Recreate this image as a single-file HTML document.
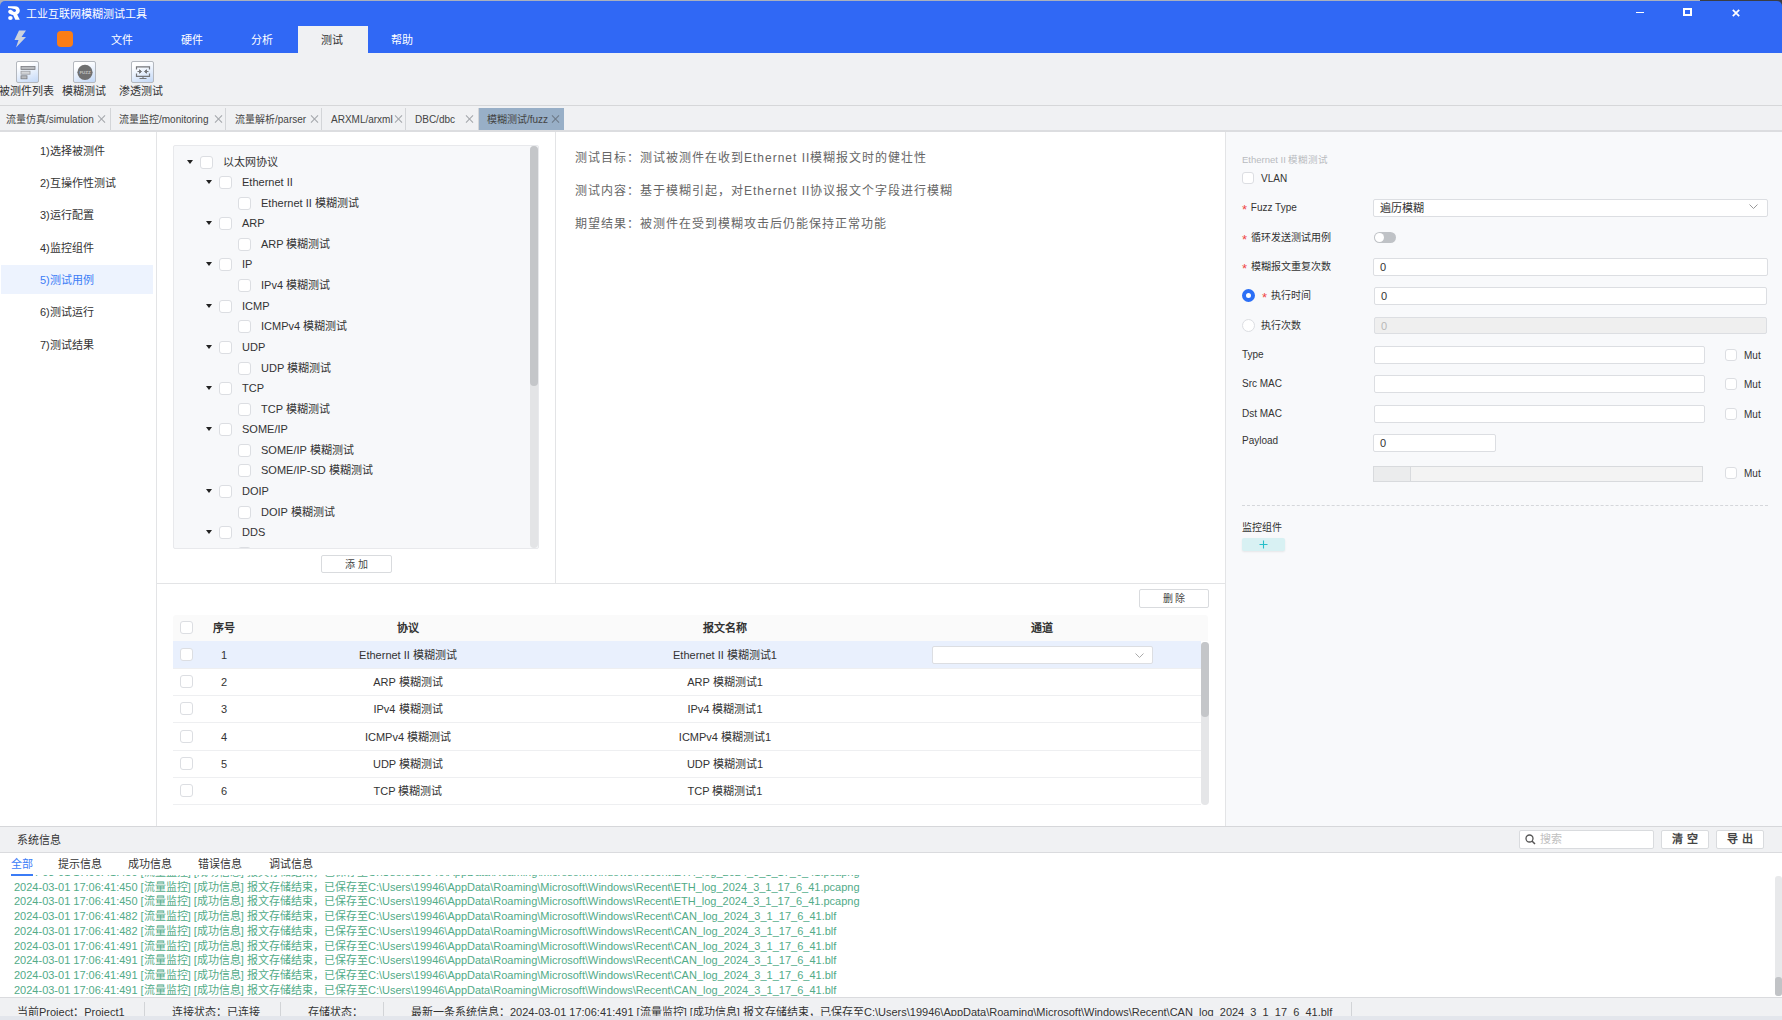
<!DOCTYPE html>
<html lang="zh-CN"><head><meta charset="utf-8">
<style>
*{box-sizing:border-box;margin:0;padding:0}
html,body{width:1782px;height:1020px;overflow:hidden;background:#fff;font-family:"Liberation Sans",sans-serif;color:#333}
.a{position:absolute}
.t{position:absolute;white-space:nowrap;line-height:1}
#title{left:0;top:1px;width:1782px;height:52px;background:#3068f5;border-radius:5px 5px 0 0}
#toolbar{left:0;top:53px;width:1782px;height:53px;background:#f0f1f3;border-bottom:1px solid #d6d7d9}
#tabs{left:0;top:106px;width:1782px;height:26px;background:#f0f1f3;border-bottom:2px solid #dcdde0}
#nav{left:0;top:132px;width:157px;height:694px;background:#fff;border-right:1px solid #e3e4e6}
.cb{position:absolute;width:13px;height:13px;border:1px solid #dcdee2;border-radius:3px;background:#fff}
.car{position:absolute;width:0;height:0;border-left:3.5px solid transparent;border-right:3.5px solid transparent;border-top:4px solid #222}

.tbi{top:61px;width:23px;height:22px;border:1px solid #b4b8be;border-radius:2px;background:linear-gradient(160deg,#ffffff 20%,#e6effc 55%,#c3d8f7)}
.tab{top:108px;height:22px;border-right:1px solid #d3d5d8;font-size:10px;color:#444}
.x{position:absolute;top:7px;width:8px;height:8px}
.x:before,.x:after{content:"";position:absolute;left:3.5px;top:-1px;width:1px;height:10px;background:#a3a6ab;transform:rotate(45deg)}
.x:after{transform:rotate(-45deg)}
.xa:before,.xa:after{background:#6d7a88}

.nv{left:40px;font-size:11px;color:#333;margin-top:1px}
.tr{font-size:11px;color:#333}
.btn{border:1px solid #d9dbde;border-radius:2px;background:#fff;font-size:10px;color:#444;text-align:center;line-height:18px}
.ds{left:575px;margin-top:1px;font-size:12px;color:#666;letter-spacing:1px}

.lb{font-size:10px;color:#333}
.req{color:#f04545;margin-right:1px;position:relative;top:2.5px;font-size:13px;line-height:0}
.inp{border:1px solid #dcdee2;border-radius:2px;background:#fff;font-size:11px;color:#333;line-height:16px}
.th{font-size:11px;font-weight:bold;color:#333;margin-top:1px}
.td{font-size:11px;color:#333}

.lt{top:859px;font-size:11px;color:#333}
.lg{left:14px;font-size:11px;color:#52ab88}
.st{top:1007px;font-size:11px;color:#333}
.sp{top:1002px;width:1px;height:14px;background:#d2d4d7}
</style></head><body>
<div class="a" style="left:0;top:0;width:1782px;height:2px;background:#aab0bd"></div><div class="a" style="left:1700px;top:0;width:82px;height:2px;background:#3a3d44"></div>
<div class="a" style="left:0;top:0;width:10px;height:10px;background:#aab0bd"></div><div class="a" style="left:1772px;top:0;width:10px;height:10px;background:#3a3d44"></div>
<div id="title" class="a"></div>
<div id="toolbar" class="a"></div>
<div id="tabs" class="a"></div>
<div id="nav" class="a"></div>

<!-- title -->
<svg class="a" style="left:0;top:0" width="26" height="25" viewBox="0 0 26 25"><path d="M8 6.2 H14.8 C18.2 6.2 19.8 8.2 19.8 10.6 C19.8 12.6 18.7 13.9 17.2 14.5 L19.8 19.8 H15.3 L13.1 15 C11.3 14.8 9.6 14.1 8.7 13.1 C7.9 12.1 8.1 10.3 9.4 9.9 C10.7 9.5 11.9 10.1 12.9 11.2 L14.2 11.9 C15.4 11.9 16 11.3 16 10.5 C16 9.6 15.3 9 14.2 9 C12 8.4 9.8 8 8 7.9 Z" fill="#fff"/><ellipse cx="10.4" cy="17.9" rx="2.3" ry="2" fill="#fff"/></svg>
<div class="t" style="left:26px;top:9px;font-size:11px;color:#fff">工业互联网模糊测试工具</div>
<div class="a" style="left:1636px;top:11.5px;width:8px;height:1.5px;background:#fff"></div>
<div class="a" style="left:1684px;top:8px;width:8px;height:7px;border-top:1px solid #dfe8fd;border-right:1px solid #dfe8fd"></div>
<div class="a" style="left:1683px;top:8px;width:9px;height:8px;border:2px solid #fff"></div>
<svg class="a" style="left:1732px;top:8.5px" width="8" height="8" viewBox="0 0 8 8"><path d="M0.8 0.8 L7.2 7.2 M7.2 0.8 L0.8 7.2" stroke="#fff" stroke-width="1.7"/></svg>
<!-- menu -->
<svg class="a" style="left:13px;top:30px" width="14" height="18" viewBox="0 0 14 18"><path d="M6 0.5 L13 0.5 L8.5 7 L13 7 L3 17.5 L5.5 10 L1.5 10 Z" fill="#cdd3dd"/></svg>
<div class="a" style="left:57px;top:31px;width:16px;height:16px;border-radius:4px;background:#fb7d17"></div>
<div class="a" style="left:298px;top:26px;width:70px;height:27px;background:#f0f1f3"></div>
<div class="t" style="left:111px;top:35px;font-size:11px;color:#fff">文件</div>
<div class="t" style="left:181px;top:35px;font-size:11px;color:#fff">硬件</div>
<div class="t" style="left:251px;top:35px;font-size:11px;color:#fff">分析</div>
<div class="t" style="left:321px;top:35px;font-size:11px;color:#333">测试</div>
<div class="t" style="left:391px;top:35px;font-size:11px;color:#fff">帮助</div>
<!-- toolbar icons -->
<div class="a tbi" style="left:16px"><svg class="a" style="left:0;top:0" width="22" height="21" viewBox="0 0 22 21"><rect x="4" y="4.5" width="14" height="3" fill="#b9bbbe" stroke="#7a7c80" stroke-width="0.8"/><rect x="4" y="9.2" width="9" height="3" fill="#d4d6d9" stroke="#9a9ca0" stroke-width="0.8"/><rect x="4" y="13.8" width="6" height="3" fill="#b9bbbe" stroke="#7a7c80" stroke-width="0.8"/></svg></div>
<div class="a tbi" style="left:73px"><svg class="a" style="left:0;top:0" width="22" height="21" viewBox="0 0 22 21"><circle cx="11" cy="10.3" r="7.6" fill="#707070"/><text x="11" y="12" font-size="4.4" font-family="Liberation Sans" font-weight="bold" fill="#c4c4c4" text-anchor="middle">FUZZ</text></svg></div>
<div class="a tbi" style="left:131px"><svg class="a" style="left:0;top:0" width="22" height="21" viewBox="0 0 22 21"><path d="M4.5 7.5 V4.8 H17.5 V7.5 M4.5 11.5 V14.3 H17.5 V11.5" fill="none" stroke="#747679" stroke-width="1.2"/><path d="M5.5 9.5 H9 M7.5 7.8 L9.5 9.5 L7.5 11.2 Z M16.5 9.5 H13 M14.5 7.8 L12.5 9.5 L14.5 11.2 Z" stroke="#747679" stroke-width="1" fill="#747679"/><path d="M11 14.3 V16.3 M7.5 16.5 H14.5" stroke="#747679" stroke-width="1.1"/></svg></div>
<div class="t" style="left:-1px;top:86px;font-size:11px;color:#333">被测件列表</div>
<div class="t" style="left:62px;top:86px;font-size:11px;color:#333">模糊测试</div>
<div class="t" style="left:119px;top:86px;font-size:11px;color:#333">渗透测试</div>
<!-- tabs -->
<div class="a" style="left:0;top:108px;width:1782px;height:22px;background:#f0f1f3"></div>
<div class="a tab" style="left:0;width:111px"><span class="t" style="left:6px;top:7px">流量仿真/simulation</span><span class="x" style="left:97px"></span></div>
<div class="a tab" style="left:111px;width:115px"><span class="t" style="left:8px;top:7px">流量监控/monitoring</span><span class="x" style="left:103px"></span></div>
<div class="a tab" style="left:226px;width:96px"><span class="t" style="left:9px;top:7px">流量解析/parser</span><span class="x" style="left:84px"></span></div>
<div class="a tab" style="left:322px;width:84px"><span class="t" style="left:9px;top:7px">ARXML/arxml</span><span class="x" style="left:72px"></span></div>
<div class="a tab" style="left:406px;width:73px"><span class="t" style="left:9px;top:7px">DBC/dbc</span><span class="x" style="left:59px"></span></div>
<div class="a tab" style="left:479px;width:85px;background:#98afc7;border-right:none"><span class="t" style="left:8px;top:7px">模糊测试/fuzz</span><span class="x xa" style="left:72px"></span></div>

<!-- nav -->
<div class="a" style="left:1px;top:265px;width:152px;height:29px;background:#edf3fe"></div>
<div class="t nv" style="top:145px">1)选择被测件</div>
<div class="t nv" style="top:177px">2)互操作性测试</div>
<div class="t nv" style="top:209px">3)运行配置</div>
<div class="t nv" style="top:242px">4)监控组件</div>
<div class="t nv" style="top:274px;color:#3b7cf6">5)测试用例</div>
<div class="t nv" style="top:306px">6)测试运行</div>
<div class="t nv" style="top:339px">7)测试结果</div>
<!-- tree panel -->
<div class="a" style="left:157px;top:132px;width:399px;height:452px;border-right:1px solid #e3e4e6"></div>
<div class="a" style="left:157px;top:583px;width:1068px;height:1px;background:#e3e4e6"></div>
<div class="a" style="left:173px;top:145px;width:366px;height:404px;background:#f7f8fa;border:1px solid #e8e9ec;border-radius:2px"></div>
<div class="a" style="left:530px;top:146px;width:8px;height:402px;background:#e3e4e6;border-radius:4px"></div>
<div class="a" style="left:530px;top:146px;width:8px;height:240px;background:#c4c6c9;border-radius:4px"></div>
<div class="a" style="left:0;top:0;width:1782px;height:548px;overflow:hidden">
<div class="car" style="left:187px;top:160px"></div><div class="cb" style="left:200px;top:156px"></div><div class="t tr" style="left:223px;top:157px">以太网协议</div>
<div class="car" style="left:206px;top:180px"></div><div class="cb" style="left:219px;top:176px"></div><div class="t tr" style="left:242px;top:177px">Ethernet II</div>
<div class="cb" style="left:238px;top:197px"></div><div class="t tr" style="left:261px;top:198px">Ethernet II 模糊测试</div>
<div class="car" style="left:206px;top:221px"></div><div class="cb" style="left:219px;top:217px"></div><div class="t tr" style="left:242px;top:218px">ARP</div>
<div class="cb" style="left:238px;top:238px"></div><div class="t tr" style="left:261px;top:239px">ARP 模糊测试</div>
<div class="car" style="left:206px;top:262px"></div><div class="cb" style="left:219px;top:258px"></div><div class="t tr" style="left:242px;top:259px">IP</div>
<div class="cb" style="left:238px;top:279px"></div><div class="t tr" style="left:261px;top:280px">IPv4 模糊测试</div>
<div class="car" style="left:206px;top:304px"></div><div class="cb" style="left:219px;top:300px"></div><div class="t tr" style="left:242px;top:301px">ICMP</div>
<div class="cb" style="left:238px;top:320px"></div><div class="t tr" style="left:261px;top:321px">ICMPv4 模糊测试</div>
<div class="car" style="left:206px;top:345px"></div><div class="cb" style="left:219px;top:341px"></div><div class="t tr" style="left:242px;top:342px">UDP</div>
<div class="cb" style="left:238px;top:362px"></div><div class="t tr" style="left:261px;top:363px">UDP 模糊测试</div>
<div class="car" style="left:206px;top:386px"></div><div class="cb" style="left:219px;top:382px"></div><div class="t tr" style="left:242px;top:383px">TCP</div>
<div class="cb" style="left:238px;top:403px"></div><div class="t tr" style="left:261px;top:404px">TCP 模糊测试</div>
<div class="car" style="left:206px;top:427px"></div><div class="cb" style="left:219px;top:423px"></div><div class="t tr" style="left:242px;top:424px">SOME/IP</div>
<div class="cb" style="left:238px;top:444px"></div><div class="t tr" style="left:261px;top:445px">SOME/IP 模糊测试</div>
<div class="cb" style="left:238px;top:464px"></div><div class="t tr" style="left:261px;top:465px">SOME/IP-SD 模糊测试</div>
<div class="car" style="left:206px;top:489px"></div><div class="cb" style="left:219px;top:485px"></div><div class="t tr" style="left:242px;top:486px">DOIP</div>
<div class="cb" style="left:238px;top:506px"></div><div class="t tr" style="left:261px;top:507px">DOIP 模糊测试</div>
<div class="car" style="left:206px;top:530px"></div><div class="cb" style="left:219px;top:526px"></div><div class="t tr" style="left:242px;top:527px">DDS</div>
<div class="cb" style="left:238px;top:547px"></div>

</div>

<div class="a btn" style="left:321px;top:555px;width:71px;height:18px">添 加</div>
<!-- description -->
<div class="t ds" style="top:151px">测试目标：测试被测件在收到Ethernet II模糊报文时的健壮性</div>
<div class="t ds" style="top:184px">测试内容：基于模糊引起，对Ethernet II协议报文个字段进行模糊</div>
<div class="t ds" style="top:217px">期望结果：被测件在受到模糊攻击后仍能保持正常功能</div>

<!-- right panel -->
<div class="a" style="left:1225px;top:132px;width:557px;height:694px;background:#f8f9fb;border-left:1px solid #e3e4e6"></div>
<div class="t" style="left:1242px;top:155px;font-size:9.5px;color:#b9bbbf">Ethernet II 模糊测试</div>
<div class="cb" style="left:1242px;top:172px;width:12px;height:12px"></div>
<div class="t lb" style="left:1261px;top:174px">VLAN</div>
<div class="t lb" style="left:1242px;top:203px"><span class="req">*</span> Fuzz Type</div>
<div class="a inp" style="left:1373px;top:199px;width:395px;height:18px;padding-left:6px">遍历模糊</div>
<svg class="a" style="left:1749px;top:204px" width="9" height="6" viewBox="0 0 9 6"><path d="M0.5 0.5 L4.5 4.5 L8.5 0.5" stroke="#999" fill="none" stroke-width="1"/></svg>
<div class="t lb" style="left:1242px;top:233px"><span class="req">*</span> 循环发送测试用例</div>
<div class="a" style="left:1374px;top:232px;width:22px;height:11px;border-radius:6px;background:#bfc2c6"></div>
<div class="a" style="left:1375px;top:233px;width:9px;height:9px;border-radius:50%;background:#fff"></div>
<div class="t lb" style="left:1242px;top:262px"><span class="req">*</span> 模糊报文重复次数</div>
<div class="a inp" style="left:1373px;top:258px;width:395px;height:18px;padding-left:6px">0</div>
<div class="a" style="left:1242px;top:289px;width:13px;height:13px;border-radius:50%;border:4px solid #2b6ff6;background:#fff"></div>
<div class="t lb" style="left:1262px;top:291px"><span class="req">*</span> 执行时间</div>
<div class="a inp" style="left:1374px;top:287px;width:393px;height:18px;padding-left:6px">0</div>
<div class="a" style="left:1242px;top:319px;width:13px;height:13px;border-radius:50%;border:1px solid #dcdee2;background:#fff"></div>
<div class="t lb" style="left:1261px;top:321px">执行次数</div>
<div class="a inp" style="left:1374px;top:317px;width:393px;height:17px;padding-left:6px;background:#efefef;color:#b8b8b8">0</div>
<div class="t lb" style="left:1242px;top:350px">Type</div>
<div class="a inp" style="left:1374px;top:346px;width:331px;height:18px"></div>
<div class="cb" style="left:1725px;top:349px;width:12px;height:12px"></div>
<div class="t lb" style="left:1744px;top:351px">Mut</div>
<div class="t lb" style="left:1242px;top:379px">Src MAC</div>
<div class="a inp" style="left:1374px;top:375px;width:331px;height:18px"></div>
<div class="cb" style="left:1725px;top:378px;width:12px;height:12px"></div>
<div class="t lb" style="left:1744px;top:380px">Mut</div>
<div class="t lb" style="left:1242px;top:409px">Dst MAC</div>
<div class="a inp" style="left:1374px;top:405px;width:331px;height:18px"></div>
<div class="cb" style="left:1725px;top:408px;width:12px;height:12px"></div>
<div class="t lb" style="left:1744px;top:410px">Mut</div>
<div class="t lb" style="left:1242px;top:436px">Payload</div>
<div class="a inp" style="left:1373px;top:434px;width:123px;height:18px;padding-left:6px">0</div>
<div class="a" style="left:1373px;top:466px;width:330px;height:16px;border:1px solid #d8dadd;background:#f3f3f3"></div><div class="a" style="left:1374px;top:467px;width:36px;height:14px;background:#ebeced"></div>
<div class="a" style="left:1410px;top:467px;width:1px;height:14px;background:#d8dadd"></div>
<div class="cb" style="left:1725px;top:467px;width:12px;height:12px"></div>
<div class="t lb" style="left:1744px;top:469px">Mut</div>
<div class="a" style="left:1242px;top:505px;width:526px;height:0;border-top:1px dashed #d5d7db"></div>
<div class="t lb" style="left:1242px;top:523px">监控组件</div>
<div class="a" style="left:1242px;top:538px;width:43px;height:13px;border-radius:2px;background:#d8f1f3;box-shadow:0 1px 2px rgba(0,0,0,0.08)"></div>
<svg class="a" style="left:1259px;top:540px" width="9" height="9" viewBox="0 0 9 9"><path d="M4.5 0.5 V8.5 M0.5 4.5 H8.5" stroke="#26bfc9" stroke-width="1.1"/></svg>
<!-- table -->
<div class="a btn" style="left:1139px;top:589px;width:70px;height:19px">删 除</div>
<div class="a" style="left:173px;top:615px;width:1035px;height:26px;background:#fafafa;border-radius:3px 3px 0 0"></div>
<div class="cb" style="left:180px;top:621px"></div>
<div class="t th" style="left:213px;top:622px">序号</div>
<div class="t th" style="left:397px;top:622px">协议</div>
<div class="t th" style="left:703px;top:622px">报文名称</div>
<div class="t th" style="left:1031px;top:622px">通道</div>
<div class="a" style="left:173px;top:641px;width:1028px;height:27px;background:#e9f0fd;"></div><div class="cb" style="left:180px;top:648px"></div><div class="t td" style="left:174px;width:100px;text-align:center;top:650px">1</div><div class="t td" style="left:258px;width:300px;text-align:center;top:650px">Ethernet II 模糊测试</div><div class="t td" style="left:575px;width:300px;text-align:center;top:650px">Ethernet II 模糊测试1</div>
<div class="a" style="left:173px;top:668px;width:1028px;height:27px;background:#fff;"></div><div class="cb" style="left:180px;top:675px"></div><div class="t td" style="left:174px;width:100px;text-align:center;top:677px">2</div><div class="t td" style="left:258px;width:300px;text-align:center;top:677px">ARP 模糊测试</div><div class="t td" style="left:575px;width:300px;text-align:center;top:677px">ARP 模糊测试1</div>
<div class="a" style="left:173px;top:695px;width:1028px;height:27px;background:#fff;"></div><div class="cb" style="left:180px;top:702px"></div><div class="t td" style="left:174px;width:100px;text-align:center;top:704px">3</div><div class="t td" style="left:258px;width:300px;text-align:center;top:704px">IPv4 模糊测试</div><div class="t td" style="left:575px;width:300px;text-align:center;top:704px">IPv4 模糊测试1</div>
<div class="a" style="left:173px;top:723px;width:1028px;height:27px;background:#fff;"></div><div class="cb" style="left:180px;top:730px"></div><div class="t td" style="left:174px;width:100px;text-align:center;top:732px">4</div><div class="t td" style="left:258px;width:300px;text-align:center;top:732px">ICMPv4 模糊测试</div><div class="t td" style="left:575px;width:300px;text-align:center;top:732px">ICMPv4 模糊测试1</div>
<div class="a" style="left:173px;top:750px;width:1028px;height:27px;background:#fff;"></div><div class="cb" style="left:180px;top:757px"></div><div class="t td" style="left:174px;width:100px;text-align:center;top:759px">5</div><div class="t td" style="left:258px;width:300px;text-align:center;top:759px">UDP 模糊测试</div><div class="t td" style="left:575px;width:300px;text-align:center;top:759px">UDP 模糊测试1</div>
<div class="a" style="left:173px;top:777px;width:1028px;height:27px;background:#fff;"></div><div class="cb" style="left:180px;top:784px"></div><div class="t td" style="left:174px;width:100px;text-align:center;top:786px">6</div><div class="t td" style="left:258px;width:300px;text-align:center;top:786px">TCP 模糊测试</div><div class="t td" style="left:575px;width:300px;text-align:center;top:786px">TCP 模糊测试1</div>

<div class="a" style="left:173px;top:668px;width:1028px;height:1px;background:#eeeff1"></div><div class="a" style="left:173px;top:695px;width:1028px;height:1px;background:#eeeff1"></div><div class="a" style="left:173px;top:722px;width:1028px;height:1px;background:#eeeff1"></div><div class="a" style="left:173px;top:750px;width:1028px;height:1px;background:#eeeff1"></div><div class="a" style="left:173px;top:777px;width:1028px;height:1px;background:#eeeff1"></div><div class="a" style="left:173px;top:804px;width:1028px;height:1px;background:#eeeff1"></div>
<div class="a inp" style="left:932px;top:646px;width:221px;height:18px"></div>
<svg class="a" style="left:1135px;top:653px" width="9" height="6" viewBox="0 0 9 6"><path d="M0.5 0.5 L4.5 4.5 L8.5 0.5" stroke="#aaa" fill="none" stroke-width="1"/></svg>
<div class="a" style="left:1201px;top:642px;width:8px;height:163px;background:#e5e6e8;border-radius:4px"></div>
<div class="a" style="left:1201px;top:642px;width:8px;height:75px;background:#c4c6c9;border-radius:4px"></div>

<!-- bottom -->
<div class="a" style="left:0;top:826px;width:1782px;height:27px;background:#f0f1f3;border-top:1px solid #d6d7da;border-bottom:1px solid #dadbde"></div>
<div class="t" style="left:17px;top:835px;font-size:11px;color:#333">系统信息</div>
<div class="a" style="left:1519px;top:830px;width:135px;height:19px;border:1px solid #d9dbde;border-radius:2px;background:#fff"></div>
<svg class="a" style="left:1525px;top:834px" width="11" height="11" viewBox="0 0 11 11"><circle cx="4.5" cy="4.5" r="3.5" stroke="#555" stroke-width="1.3" fill="none"/><path d="M7 7 L10 10" stroke="#555" stroke-width="1.5"/></svg>
<div class="t" style="left:1540px;top:834px;font-size:11px;color:#c0c0c0">搜索</div>
<div class="a btn" style="left:1661px;top:830px;width:48px;height:19px;font-size:11px;line-height:17px;font-weight:bold">清 空</div>
<div class="a btn" style="left:1716px;top:830px;width:48px;height:19px;font-size:11px;line-height:17px;font-weight:bold">导 出</div>
<div class="t lt" style="left:11px;color:#3b7cf6">全部</div>
<div class="a" style="left:11px;top:874px;width:22px;height:2px;background:#3b7cf6;z-index:2"></div>
<div class="t lt" style="left:58px">提示信息</div>
<div class="t lt" style="left:128px">成功信息</div>
<div class="t lt" style="left:198px">错误信息</div>
<div class="t lt" style="left:269px">调试信息</div>
<div class="a" style="left:0;top:875px;width:1774px;height:122px;overflow:hidden">
<div class="t lg" style="top:-8px">2024-03-01 17:06:41:450 [流量监控] [成功信息] 报文存储结束，已保存至C:\Users\19946\AppData\Roaming\Microsoft\Windows\Recent\ETH_log_2024_3_1_17_6_41.pcapng</div>
<div class="t lg" style="top:7px">2024-03-01 17:06:41:450 [流量监控] [成功信息] 报文存储结束，已保存至C:\Users\19946\AppData\Roaming\Microsoft\Windows\Recent\ETH_log_2024_3_1_17_6_41.pcapng</div>
<div class="t lg" style="top:21px">2024-03-01 17:06:41:450 [流量监控] [成功信息] 报文存储结束，已保存至C:\Users\19946\AppData\Roaming\Microsoft\Windows\Recent\ETH_log_2024_3_1_17_6_41.pcapng</div>
<div class="t lg" style="top:36px">2024-03-01 17:06:41:482 [流量监控] [成功信息] 报文存储结束，已保存至C:\Users\19946\AppData\Roaming\Microsoft\Windows\Recent\CAN_log_2024_3_1_17_6_41.blf</div>
<div class="t lg" style="top:51px">2024-03-01 17:06:41:482 [流量监控] [成功信息] 报文存储结束，已保存至C:\Users\19946\AppData\Roaming\Microsoft\Windows\Recent\CAN_log_2024_3_1_17_6_41.blf</div>
<div class="t lg" style="top:66px">2024-03-01 17:06:41:491 [流量监控] [成功信息] 报文存储结束，已保存至C:\Users\19946\AppData\Roaming\Microsoft\Windows\Recent\CAN_log_2024_3_1_17_6_41.blf</div>
<div class="t lg" style="top:80px">2024-03-01 17:06:41:491 [流量监控] [成功信息] 报文存储结束，已保存至C:\Users\19946\AppData\Roaming\Microsoft\Windows\Recent\CAN_log_2024_3_1_17_6_41.blf</div>
<div class="t lg" style="top:95px">2024-03-01 17:06:41:491 [流量监控] [成功信息] 报文存储结束，已保存至C:\Users\19946\AppData\Roaming\Microsoft\Windows\Recent\CAN_log_2024_3_1_17_6_41.blf</div>
<div class="t lg" style="top:110px">2024-03-01 17:06:41:491 [流量监控] [成功信息] 报文存储结束，已保存至C:\Users\19946\AppData\Roaming\Microsoft\Windows\Recent\CAN_log_2024_3_1_17_6_41.blf</div>

</div>
<div class="a" style="left:1775px;top:876px;width:7px;height:120px;background:#e8e9eb;border-radius:3px"></div>
<div class="a" style="left:1775px;top:977px;width:7px;height:19px;background:#c1c3c6;border-radius:3px"></div>
<!-- status -->
<div class="a" style="left:0;top:997px;width:1782px;height:23px;background:#f0f1f3;border-top:1px solid #dadbde"></div>

<div class="t st" style="left:17px">当前Project：Project1</div>
<div class="a sp" style="left:144px"></div>
<div class="t st" style="left:172px">连接状态：已连接</div>
<div class="a sp" style="left:280px"></div>
<div class="t st" style="left:308px">存储状态：</div>
<div class="a sp" style="left:383px"></div>
<div class="t st" style="left:411px">最新一条系统信息：2024-03-01 17:06:41:491 [流量监控] [成功信息] 报文存储结束，已保存至C:\Users\19946\AppData\Roaming\Microsoft\Windows\Recent\CAN_log_2024_3_1_17_6_41.blf</div>
<div class="a sp" style="left:1351px"></div>
<div class="a" style="left:0;top:1016px;width:1782px;height:4px;background:#e3e6ec"></div>
</body></html>
